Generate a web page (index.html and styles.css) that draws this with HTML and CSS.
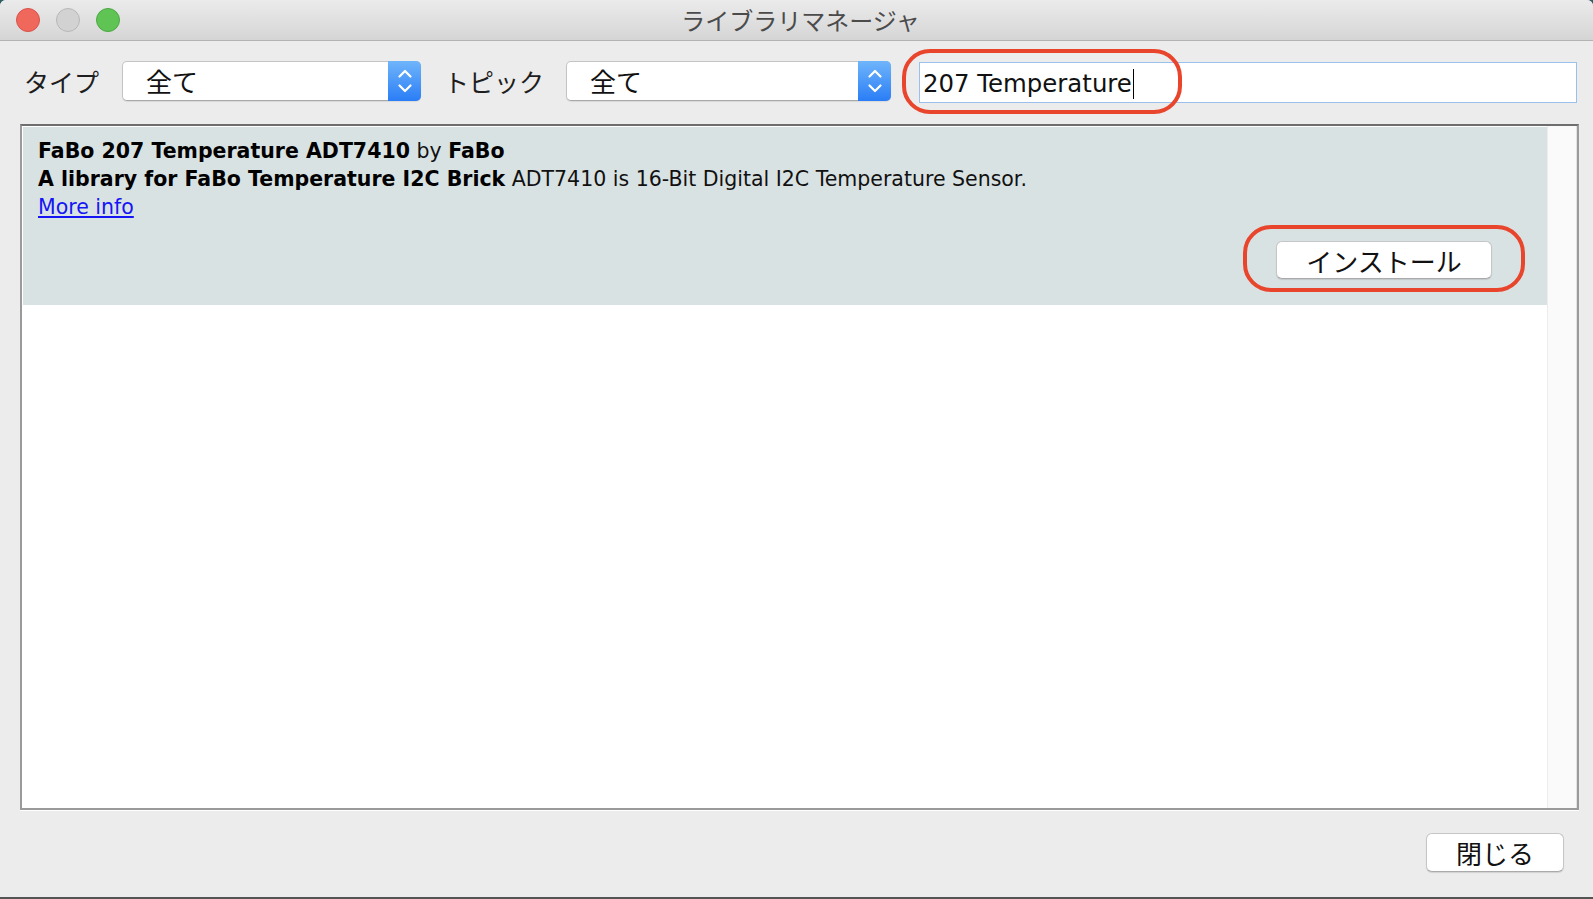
FILE: index.html
```html
<!DOCTYPE html>
<html lang="ja">
<head>
<meta charset="utf-8">
<title>ライブラリマネージャ</title>
<link rel="stylesheet" href="styles.css">
</head>
<body>
<div class="window">
  <div class="titlebar">
    <div class="lights">
      <span class="light red"></span>
      <span class="light gray"></span>
      <span class="light green"></span>
    </div>
    <div class="title">ライブラリマネージャ</div>
    <div class="spacer"></div>
  </div>

  <div class="toolbar">
    <span class="label label-type">タイプ</span>
    <div class="select select-type">
      <span class="value">全て</span>
      <span class="stepper">
        <svg width="18" height="30" viewBox="0 0 18 30"><path d="M3.5 10.5 L9 5 L14.5 10.5" fill="none" stroke="#fff" stroke-width="2.2" stroke-linecap="round" stroke-linejoin="round"/><path d="M3.5 19.5 L9 25 L14.5 19.5" fill="none" stroke="#fff" stroke-width="2.2" stroke-linecap="round" stroke-linejoin="round"/></svg>
      </span>
    </div>
    <span class="label label-topic">トピック</span>
    <div class="select select-topic">
      <span class="value">全て</span>
      <span class="stepper">
        <svg width="18" height="30" viewBox="0 0 18 30"><path d="M3.5 10.5 L9 5 L14.5 10.5" fill="none" stroke="#fff" stroke-width="2.2" stroke-linecap="round" stroke-linejoin="round"/><path d="M3.5 19.5 L9 25 L14.5 19.5" fill="none" stroke="#fff" stroke-width="2.2" stroke-linecap="round" stroke-linejoin="round"/></svg>
      </span>
    </div>
    <div class="search">
      <span class="query">207 Temperature</span><span class="caret"></span>
      <span class="ring ring-search"></span>
    </div>
  </div>

  <div class="listbox">
    <div class="list">
      <div class="item">
        <div class="line"><b>FaBo 207 Temperature ADT7410</b> by <b>FaBo</b></div>
        <div class="line"><b>A library for FaBo Temperature I2C Brick</b> ADT7410 is 16-Bit Digital I2C Temperature Sensor.</div>
        <div class="line"><a class="more" href="#">More info</a></div>
        <div class="actions">
          <button class="btn btn-install">インストール<span class="ring ring-install"></span></button>
        </div>
      </div>
    </div>
    <div class="track"></div>
  </div>

  <div class="footer">
    <button class="btn btn-close">閉じる</button>
  </div>
  <div class="bottom-edge"></div>
</div>
</body>
</html>
```

FILE: styles.css
```css
html, body {
  margin: 0;
  padding: 0;
  background: #2f5d64;
}

.window {
  width: 1593px;
  height: 899px;
  background: #ececec;
  border-top-left-radius: 6px;
  border-top-right-radius: 6px;
  overflow: hidden;
  display: flex;
  flex-direction: column;
  font-family: "Noto Sans CJK JP", "DejaVu Sans", sans-serif;
  color: #111;
}

/* title bar */
.titlebar {
  height: 40px;
  border-bottom: 1px solid #b3b3b3;
  background: linear-gradient(#ebebeb, #d5d5d5);
  display: grid;
  grid-template-columns: 1fr auto 1fr;
  align-items: center;
}

.lights {
  display: flex;
  gap: 16px;
  padding-left: 16px;
}

.light {
  width: 22px;
  height: 22px;
  border-radius: 50%;
  border: 1px solid transparent;
}

.light.red { background: #f0675c; border-color: #d9534a; }
.light.gray { background: #d2d2d2; border-color: #b8b8b8; }
.light.green { background: #5fc453; border-color: #4da843; }

.title {
  font-size: 24px;
  color: #4b4b4b;
  line-height: 40px;
  padding-left: 8px;
}

/* toolbar */
.toolbar {
  display: flex;
  align-items: flex-start;
  padding: 20px 16px 0 24px;
  height: 63px;
}

.label {
  font-size: 25px;
  line-height: 40px;
  color: #1e1e1e;
}

.label-type { margin-right: 23px; }
.label-topic { margin-left: 23px; margin-right: 22px; }

.select {
  height: 38px;
  background: #fff;
  border: 1px solid #c4c4c4;
  border-bottom-color: #a8a8a8;
  border-radius: 5px;
  display: flex;
  align-items: center;
  box-shadow: 0 1px 1px rgba(0, 0, 0, 0.08);
}

.select-type { width: 297px; }
.select-topic { width: 323px; }

.select .value {
  flex: 1;
  font-size: 26px;
  padding-left: 23px;
  line-height: 36px;
  color: #111;
}

.stepper {
  width: 33px;
  height: 40px;
  margin: -1px -1px -1px 0;
  border-radius: 0 5px 5px 0;
  background: linear-gradient(#6fb5fb, #2a7df6);
  display: flex;
  align-items: center;
  justify-content: center;
}

.search {
  position: relative;
  flex: 1;
  margin-left: 28px;
  margin-top: 1px;
  height: 39px;
  background: #fff;
  border: 1px solid #9cc0ee;
  display: flex;
  align-items: center;
  padding-left: 3px;
}

.query {
  font-family: "DejaVu Sans", sans-serif;
  font-size: 24.4px;
  color: #111;
  line-height: 39px;
  padding-top: 2px;
}

.caret {
  width: 1px;
  height: 30px;
  background: #000;
  margin-left: 1px;
  margin-top: 2px;
}

.ring {
  position: absolute;
  border: 4px solid #e8452c;
  border-radius: 28px;
  pointer-events: none;
}

.ring-search {
  left: -18px;
  top: -14px;
  width: 272px;
  height: 57px;
}

/* list */
.listbox {
  margin: 0 14px 0 20px;
  height: 682px;
  border: 2px solid #9a9a9a;
  border-top-color: #6e6e6e;
  background: #fff;
  display: flex;
  box-shadow: 0 1px 0 #fff;
}

.list {
  flex: 1;
  padding: 1px 0 0 1px;
}

.item {
  background: #d9e2e3;
  padding: 10px 0 0 15px;
  font-family: "DejaVu Sans", sans-serif;
  font-size: 20.5px;
  line-height: 28px;
  color: #111;
}

.item b { color: #000; }

.more {
  color: #1515f5;
  text-decoration: underline;
}

.actions {
  display: flex;
  justify-content: flex-end;
  padding: 20px 55px 26px 0;
}

.btn {
  position: relative;
  background: #fff;
  border: 1px solid #c6c6c6;
  border-bottom-color: #aaaaaa;
  border-radius: 6px;
  box-shadow: 0 1px 1px rgba(0, 0, 0, 0.12);
  font-family: "Noto Sans CJK JP", sans-serif;
  font-size: 26px;
  color: #111;
  padding: 0;
  display: flex;
  align-items: center;
  justify-content: center;
}

.btn-install {
  width: 216px;
  height: 38px;
}

.ring-install {
  left: -34px;
  top: -17px;
  right: -34px;
  bottom: -14px;
}

.track {
  width: 28px;
  background: #fafafa;
  border-left: 1px solid #ececec;
  border-right: 1px solid #e2e2e2;
}

/* footer */
.footer {
  height: 64px;
  padding: 23px 29px 0 0;
  display: flex;
  justify-content: flex-end;
  align-items: flex-start;
}

.btn-close {
  width: 138px;
  height: 39px;
}

.bottom-edge {
  height: 2px;
  background: #555;
}
```
